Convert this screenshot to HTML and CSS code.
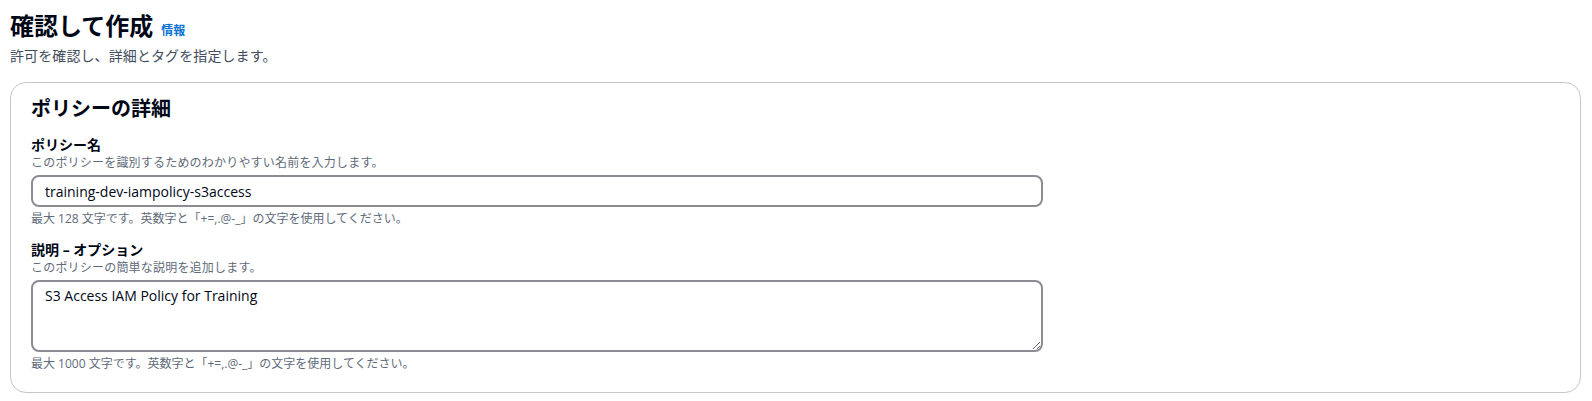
FILE: index.html
```html
<!DOCTYPE html>
<html lang="ja">
<head>
<meta charset="utf-8">
<title>確認して作成</title>
<link rel="stylesheet" href="styles.css">
</head>
<body>
<div class="page">
  <header class="page-header">
    <div class="title-row">
      <h1 class="title">確認して作成</h1>
      <a class="info-link" href="#">情報</a>
    </div>
    <p class="subtitle">許可を確認し、詳細とタグを指定します。</p>
  </header>

  <section class="card">
    <h2 class="card-title">ポリシーの詳細</h2>

    <div class="field">
      <label class="field-label" for="pname">ポリシー名</label>
      <div class="field-desc">このポリシーを識別するためのわかりやすい名前を入力します。</div>
      <input id="pname" class="text-input" type="text" value="training-dev-iampolicy-s3access">
      <div class="field-constraint">最大 128 文字です。英数字と「+=,.@-_」の文字を使用してください。</div>
    </div>

    <div class="field">
      <label class="field-label" for="pdesc">説明 – オプション</label>
      <div class="field-desc">このポリシーの簡単な説明を追加します。</div>
      <textarea id="pdesc" class="text-area">S3 Access IAM Policy for Training</textarea>
      <div class="field-constraint">最大 1000 文字です。英数字と「+=,.@-_」の文字を使用してください。</div>
    </div>
  </section>
</div>
</body>
</html>
```

FILE: styles.css
```css
html, body {
  margin: 0;
  padding: 0;
  background: #ffffff;
}

body {
  font-family: "Open Sans", "Noto Sans CJK JP", sans-serif;
  color: #000716;
}

.page {
  padding: 11px 11px 0 10px;
}

.title-row {
  display: flex;
  align-items: baseline;
  gap: 8px;
}

.title {
  margin: 0;
  font-size: 24px;
  line-height: 30px;
  font-weight: 700;
  color: #000716;
}

.info-link {
  font-size: 12px;
  line-height: 16px;
  font-weight: 700;
  color: #0972d3;
  text-decoration: none;
}

.subtitle {
  margin: 5px 0 0;
  font-size: 14px;
  line-height: 20px;
  color: #414d5c;
  letter-spacing: 0.1px;
}

.card {
  margin-top: 16px;
  border: 1px solid #c6c6cd;
  border-radius: 16px;
  padding: 14px 20px 20px 20px;
}

.card-title {
  margin: 0;
  font-size: 20px;
  line-height: 24px;
  font-weight: 700;
  color: #000716;
}

.field {
  display: flex;
  flex-direction: column;
  margin-top: 14px;
}

.field + .field {
  margin-top: 13px;
}

.field-label {
  font-size: 14px;
  line-height: 20px;
  font-weight: 700;
  color: #000716;
}

.field-desc {
  font-size: 12px;
  line-height: 16px;
  color: #5f6b7a;
  margin-bottom: 4px;
  letter-spacing: 0.2px;
}

.text-input,
.text-area {
  box-sizing: border-box;
  width: 1012px;
  border: 2px solid #8c8c94;
  border-radius: 8px;
  font-family: "Open Sans", "Noto Sans CJK JP", sans-serif;
  font-size: 14px;
  color: #000716;
  background: #ffffff;
  padding: 4px 12px;
  margin: 0;
  outline: none;
}

.text-input {
  height: 32px;
  line-height: 22px;
}

.text-area {
  height: 72px;
  line-height: 20px;
  resize: vertical;
  display: block;
}

.field-constraint {
  margin-top: 4px;
  font-size: 12px;
  line-height: 16px;
  color: #5f6b7a;
}
```
